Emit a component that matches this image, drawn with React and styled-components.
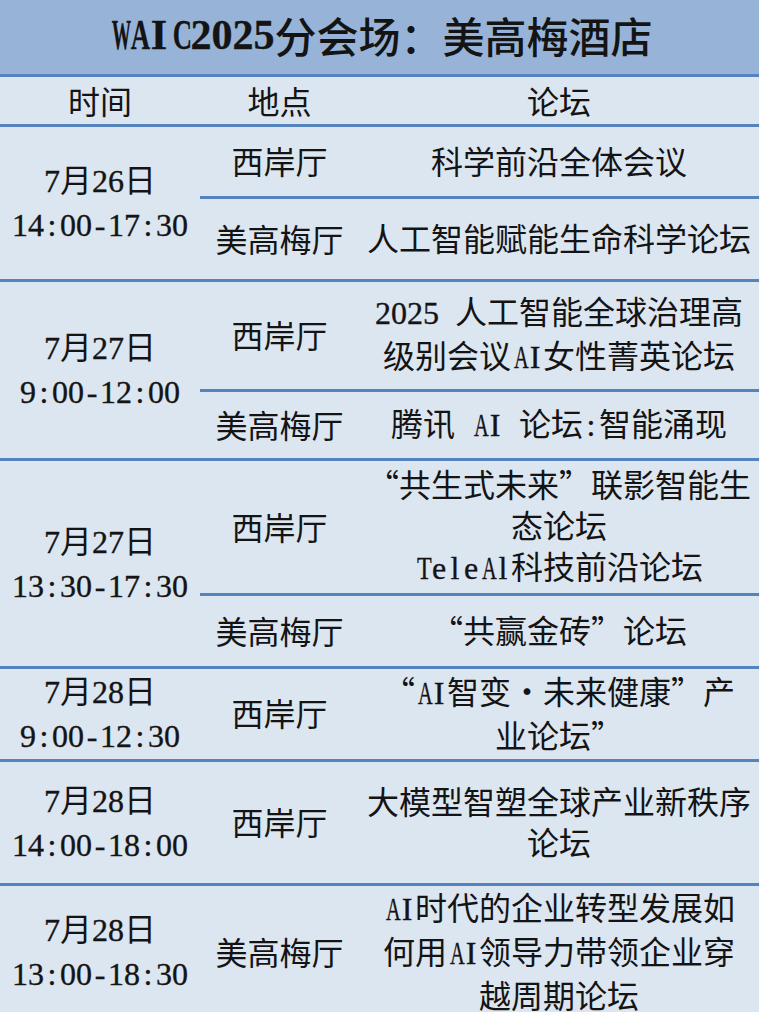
import React from "react";
import styled, { createGlobalStyle } from "styled-components";

const GlobalStyle = createGlobalStyle`
  html, body {
    margin: 0;
    padding: 0;
    background: #dce6f1;
  }
  body {
    font-family: "Noto Sans CJK SC", sans-serif;
    color: #141414;
  }
`;

const LINE = "#5583bd";

// latin glyphs of the original face sit in half-width cells; wide Times letters get squeezed
const WIDE = { A: 0.722, C: 0.667, T: 0.611, W: 0.944 };
const WIDE_BOLD = { A: 0.722, C: 0.722, T: 0.667, W: 1.0 };

const sessions = [
  {
    date: "7月26日",
    time: "14:00-17:30",
    rooms: [
      { place: "西岸厅", forum: ["科学前沿全体会议"], h: 69 },
      { place: "美高梅厅", forum: ["人工智能赋能生命科学论坛"], h: 80 },
    ],
  },
  {
    date: "7月27日",
    time: "9:00-12:00",
    rooms: [
      { place: "西岸厅", forum: ["2025 人工智能全球治理高", "级别会议AI女性菁英论坛"], h: 107 },
      { place: "美高梅厅", forum: ["腾讯 AI 论坛:智能涌现"], h: 66 },
    ],
  },
  {
    date: "7月27日",
    time: "13:30-17:30",
    rooms: [
      { place: "西岸厅", forum: ["“共生式未来”联影智能生", "态论坛", "TeleAl科技前沿论坛"], h: 132 },
      { place: "美高梅厅", forum: ["“共赢金砖”论坛"], h: 70 },
    ],
  },
  {
    date: "7月28日",
    time: "9:00-12:30",
    rooms: [{ place: "西岸厅", forum: ["“AI智变・未来健康”产", "业论坛”"], h: 89 }],
  },
  {
    date: "7月28日",
    time: "14:00-18:00",
    rooms: [{ place: "西岸厅", forum: ["大模型智塑全球产业新秩序", "论坛"], h: 121 }],
  },
  {
    date: "7月28日",
    time: "13:00-18:30",
    rooms: [
      { place: "美高梅厅", forum: ["AI时代的企业转型发展如", "何用AI领导力带领企业穿", "越周期论坛"], h: 132 },
    ],
  },
];

function Mono({ text, bold }) {
  const widths = bold ? WIDE_BOLD : WIDE;
  return (
    <LatinRun $bold={bold}>
      {text.split("").map((c, i) => (
        <Cell key={i} $scale={widths[c] ? (0.46 / widths[c]).toFixed(3) : 1}>
          {c === " " ? "\u00a0" : c}
        </Cell>
      ))}
    </LatinRun>
  );
}

// split a string so latin runs get half-width cells
function Mixed({ text, bold }) {
  const parts = text.split(/([\x20-\x7E]+)/).filter((p) => p !== "");
  return parts.map((p, i) =>
    /^[\x20-\x7E]+$/.test(p) ? (
      <Mono key={i} text={p} bold={bold} />
    ) : (
      <React.Fragment key={i}>{p}</React.Fragment>
    )
  );
}

export default function App() {
  return (
    <Page>
      <GlobalStyle />
      <Title>
        <Mixed text="WAIC2025分会场：美高梅酒店" bold />
      </Title>
      <HeadRow>
        <HeadCell>时间</HeadCell>
        <HeadCell>地点</HeadCell>
        <HeadCell>论坛</HeadCell>
      </HeadRow>
      {sessions.map((s, i) => (
        <Session key={i}>
          <TimeCell>
            <div>
              <Mixed text={s.date} />
            </div>
            <div>
              <Mono text={s.time} />
            </div>
          </TimeCell>
          <Rooms>
            {s.rooms.map((r, j) => (
              <Room key={j} $h={r.h}>
                <Place>{r.place}</Place>
                <Forum>
                  {r.forum.map((line, k) => (
                    <div key={k}>
                      <Mixed text={line} />
                    </div>
                  ))}
                </Forum>
              </Room>
            ))}
          </Rooms>
        </Session>
      ))}
    </Page>
  );
}

const Page = styled.div`
  width: 759px;
  background: #dce6f1;
  overflow: hidden;
`;

const LatinRun = styled.span`
  font-family: "Liberation Serif", serif;
  font-weight: ${(p) => (p.$bold ? 700 : 400)};
  -webkit-text-stroke: 0.35px currentColor;
`;

const Cell = styled.span`
  display: inline-block;
  width: 0.5em;
  text-align: center;
  transform: scaleX(${(p) => p.$scale});
`;

const Title = styled.div`
  height: 69px;
  padding-bottom: 5px;
  background: #97b4d8;
  border-bottom: 3px solid ${LINE};
  display: flex;
  align-items: center;
  justify-content: center;
  font-size: 42px;
  font-weight: 500;
  white-space: nowrap;
`;

const HeadRow = styled.div`
  height: 47px;
  display: grid;
  grid-template-columns: 200px 159px 1fr;
  border-bottom: 3px solid ${LINE};
`;

const HeadCell = styled.div`
  display: flex;
  align-items: center;
  justify-content: center;
  padding-bottom: 3px;
  font-size: 32px;
`;

const Session = styled.div`
  display: grid;
  grid-template-columns: 200px 1fr;
  border-bottom: 3px solid ${LINE};
`;

const TimeCell = styled.div`
  display: flex;
  flex-direction: column;
  align-items: center;
  justify-content: center;
  padding-bottom: 2px;
  font-size: 32px;
  line-height: 41px;
  white-space: nowrap;
`;

const Rooms = styled.div`
  display: flex;
  flex-direction: column;
`;

const Room = styled.div`
  height: ${(p) => p.$h}px;
  display: grid;
  grid-template-columns: 159px 1fr;
  & + & {
    border-top: 3px solid ${LINE};
  }
`;

const Place = styled.div`
  display: flex;
  align-items: center;
  justify-content: center;
  padding-bottom: 3px;
  font-size: 32px;
  white-space: nowrap;
`;

const Forum = styled.div`
  display: flex;
  flex-direction: column;
  align-items: center;
  justify-content: center;
  padding-bottom: 3px;
  font-size: 32px;
  line-height: 41px;
  white-space: nowrap;
  text-align: center;
`;
